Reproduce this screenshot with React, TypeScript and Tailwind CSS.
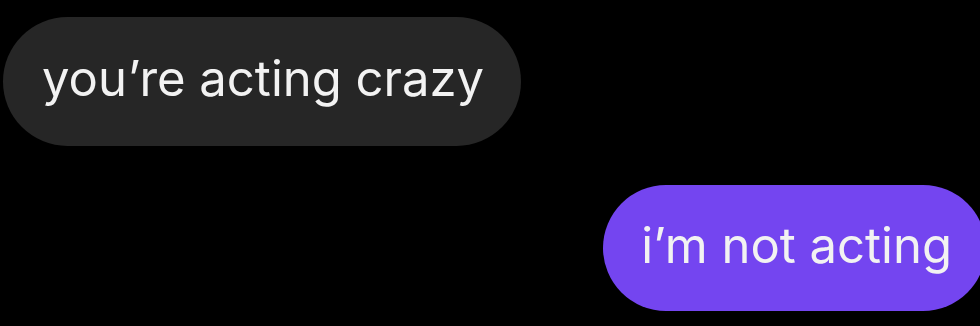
import React from 'react';

function Bubble({ text, mine }: { text: string; mine?: boolean }) {
  return (
    <div
      className={
        mine
          ? 'self-end mr-[-6px] mt-[39px] flex h-[126px] items-center rounded-full bg-[#7445f0] pl-[38px] pr-[34px]'
          : 'self-start ml-[3px] mt-[17px] flex h-[129px] items-center rounded-full bg-[#262626] pl-[39px] pr-[37px]'
      }
    >
      <span className="text-[49px] leading-none text-[#f2f2f2] pb-[6px]" style={{ fontFamily: 'Inter, "Noto Sans", sans-serif' }}>
        {text}
      </span>
    </div>
  );
}

export default function App() {
  return (
    <div className="flex h-[326px] w-[980px] flex-col overflow-hidden bg-black">
      <Bubble text="you’re acting crazy" />
      <Bubble text="i’m not acting" mine />
    </div>
  );
}
